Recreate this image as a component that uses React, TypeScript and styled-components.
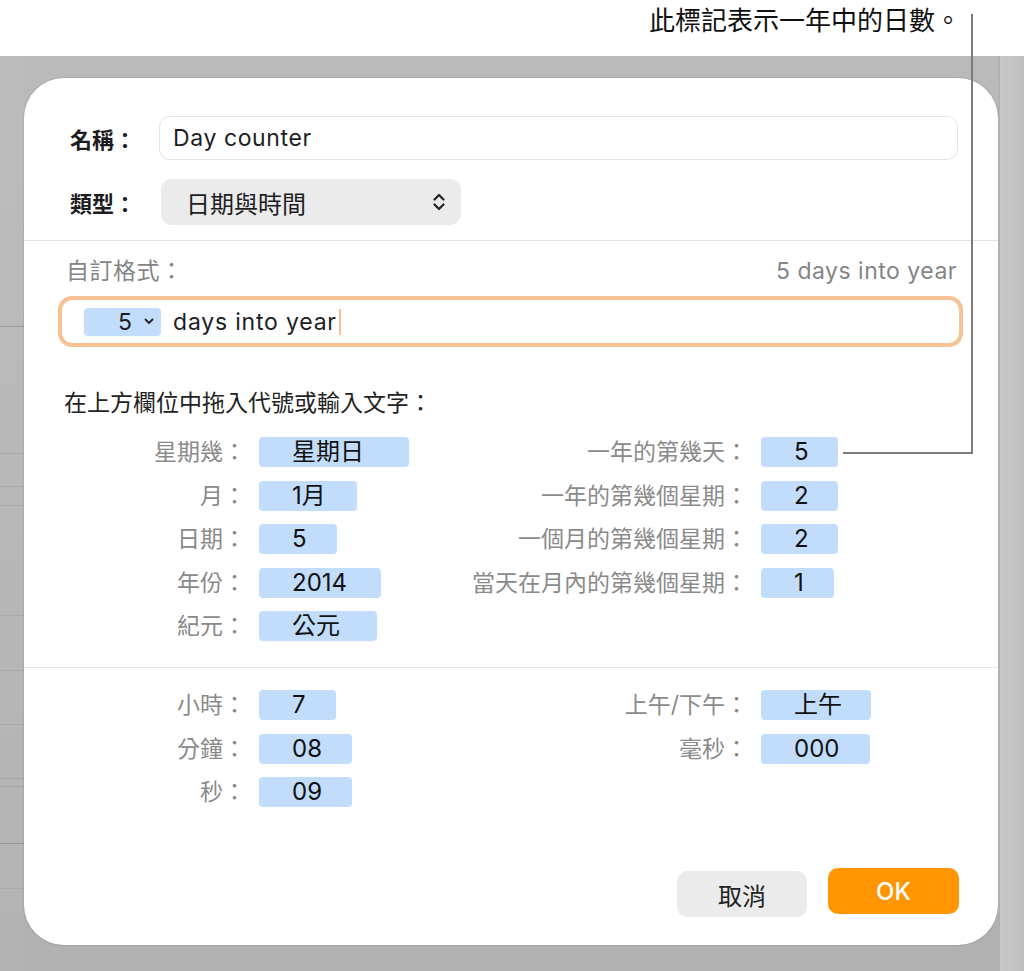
import React from 'react';
import styled, { createGlobalStyle } from 'styled-components';

const GlobalStyle = createGlobalStyle`
  body {
    margin: 0;
    font-family: Inter, 'Noto Sans CJK TC', sans-serif;
    color: #1d1d1f;
  }
`;

const Page = styled.div`
  position: relative;
  width: 1024px;
  height: 971px;
  overflow: hidden;
  background: #fff;
`;

const CalloutBar = styled.div`
  height: 56px;
  display: flex;
  justify-content: flex-end;
  align-items: flex-start;
  padding: 4px 63px 0 0;
  box-sizing: border-box;
`;

const CalloutText = styled.div`
  font-family: 'Noto Sans CJK TC', sans-serif;
  font-size: 26px;
  line-height: 30px;
  color: #111;
`;

const CalloutLine = styled.div<{ $vertical?: boolean }>`
  position: absolute;
  background: #7c7c7c;
  ${({ $vertical }) =>
    $vertical
      ? 'left: 971px; top: 14px; width: 2px; height: 440px;'
      : 'left: 843px; top: 452px; width: 130px; height: 2px;'}
`;

const Backdrop = styled.div`
  display: grid;
  grid-template-columns: 24px 974px 1fr;
  height: 915px;
  background: linear-gradient(to bottom, #bababa, #b1b1b1);
`;

const stripe = (y: number, c: string) =>
  `linear-gradient(${c}, ${c}) 0 ${y}px / 100% 1px no-repeat`;

const LeftStrip = styled.div`
  background: ${[
    stripe(270, '#9a9a9a'),
    stripe(397, '#a8a8a8'),
    stripe(430, '#a8a8a8'),
    stripe(449, '#adadad'),
    stripe(559, '#aaaaaa'),
    stripe(614, '#aaaaaa'),
    stripe(668, '#aaaaaa'),
    stripe(722, '#a6a6a6'),
    stripe(730, '#a6a6a6'),
    stripe(787, '#999999'),
    stripe(832, '#a8a8a8'),
  ].join(', ')},
    linear-gradient(to bottom, #bcbcbc, #b3b3b3);
`;

const RightStrip = styled.div`
  border-left: 2px solid #b0b0b0;
  background: linear-gradient(to right, #c8c8c8, #bfbfbf);
`;

const Dialog = styled.div`
  margin: 22px 0 26px;
  background: #fff;
  border-radius: 40px;
  box-shadow: 0 0 2px rgba(0, 0, 0, 0.25);
  display: flex;
  flex-direction: column;
  padding-top: 38px;
`;

const Header = styled.div`
  display: grid;
  grid-template-columns: 89px 1fr;
  row-gap: 19px;
  align-items: center;
  padding: 0 40px 0 46px;
`;

const FieldLabel = styled.div`
  font-family: 'Noto Sans CJK TC', sans-serif;
  font-weight: 700;
  font-size: 22px;
  color: #1d1d1f;
`;

const TextField = styled.div`
  height: 44px;
  box-sizing: border-box;
  border: 1px solid #e4e4e4;
  border-radius: 11px;
  padding-left: 13px;
  display: flex;
  align-items: center;
  font-size: 23px;
  letter-spacing: 0.6px;
  color: #1d1d1f;
`;

const Popup = styled.div`
  justify-self: start;
  margin-left: 2px;
  width: 300px;
  height: 46px;
  box-sizing: border-box;
  border-radius: 11px;
  background: #ebebeb;
  display: flex;
  align-items: center;
  justify-content: space-between;
  padding: 0 13px 0 25px;
  font-size: 24px;
  color: #1d1d1f;
`;

const Separator = styled.div<{ $gap: number }>`
  height: 1px;
  background: #e3e3e3;
  margin-top: ${({ $gap }) => $gap}px;
`;

const FormatSection = styled.div`
  padding: 0 35px 0 34px;
`;

const FormatHeader = styled.div`
  display: flex;
  justify-content: space-between;
  margin-top: 15px;
  padding: 0 6px 0 8px;
  line-height: 30px;
  font-size: 23px;
  letter-spacing: 0.5px;
  color: #858585;
`;

const FormatField = styled.div`
  margin-top: 10px;
  height: 51px;
  box-sizing: border-box;
  border: 4px solid #f7c293;
  border-radius: 14px;
  display: flex;
  align-items: center;
  padding-left: 22px;
  font-size: 23px;
  letter-spacing: 0.8px;
  color: #1d1d1f;
`;

const FormatToken = styled.div`
  width: 77px;
  height: 28px;
  box-sizing: border-box;
  border-radius: 4px;
  background: #c2dcfb;
  display: flex;
  align-items: center;
  gap: 11px;
  padding-left: 34px;
  margin-right: 12px;
  font-size: 23px;
`;

const Caret = styled.span`
  width: 2px;
  height: 26px;
  margin-left: 2px;
  background: #f7c293;
`;

const Instruction = styled.div`
  margin-top: 41px;
  padding-left: 40px;
  line-height: 30px;
  font-size: 23px;
  color: #222;
`;

const TokenGrid = styled.div<{ $top: number }>`
  display: grid;
  grid-template-columns: 222px 197px 279px auto;
  column-gap: 13px;
  grid-auto-rows: 30px;
  row-gap: 13.5px;
  align-items: center;
  margin-top: ${({ $top }) => $top}px;
`;

const TokenLabel = styled.div`
  text-align: right;
  font-size: 23px;
  line-height: 30px;
  color: #8a8a8a;
  white-space: nowrap;
`;

const Token = styled.div<{ $width: number }>`
  justify-self: start;
  width: ${({ $width }) => $width}px;
  height: 30px;
  box-sizing: border-box;
  border-radius: 4px;
  background: #c2dcfb;
  padding-left: 33px;
  font-size: 24px;
  line-height: 30px;
  color: #111;
  white-space: nowrap;
`;

const Footer = styled.div`
  margin-top: auto;
  display: flex;
  justify-content: flex-end;
  align-items: flex-end;
  gap: 21px;
  padding: 0 39px 28px 0;
`;

const Button = styled.button<{ $primary?: boolean }>`
  width: ${({ $primary }) => ($primary ? 131 : 130)}px;
  height: 46px;
  border: none;
  border-radius: 10px;
  margin-bottom: ${({ $primary }) => ($primary ? 3 : 0)}px;
  background: ${({ $primary }) => ($primary ? '#ff9500' : '#ebebeb')};
  color: ${({ $primary }) => ($primary ? '#fff' : '#222')};
  font-family: Inter, 'Noto Sans CJK TC', sans-serif;
  font-size: 24px;
  font-weight: ${({ $primary }) => ($primary ? 500 : 400)};
`;

type Pair = [string, string, number];

const dateRows: [Pair, Pair | null][] = [
  [['星期幾：', '星期日', 150], ['一年的第幾天：', '5', 77]],
  [['月：', '1月', 98], ['一年的第幾個星期：', '2', 77]],
  [['日期：', '5', 78], ['一個月的第幾個星期：', '2', 77]],
  [['年份：', '2014', 122], ['當天在月內的第幾個星期：', '1', 73]],
  [['紀元：', '公元', 118], null],
];

const timeRows: [Pair, Pair | null][] = [
  [['小時：', '7', 77], ['上午/下午：', '上午', 110]],
  [['分鐘：', '08', 93], ['毫秒：', '000', 109]],
  [['秒：', '09', 93], null],
];

function UpDownIcon(): React.ReactElement {
  return (
    <svg width='18' height='20' viewBox='0 0 18 20' fill='none'>
      <path
        d='M4.5 7.5 L9 3 L13.5 7.5 M4.5 12.5 L9 17 L13.5 12.5'
        stroke='#222'
        strokeWidth='2.2'
        strokeLinecap='round'
        strokeLinejoin='round'
      />
    </svg>
  );
}

function SmallChevron(): React.ReactElement {
  return (
    <svg width='10' height='7' viewBox='0 0 10 7' fill='none'>
      <path
        d='M1.5 1.5 L5 5 L8.5 1.5'
        stroke='#222'
        strokeWidth='1.8'
        strokeLinecap='round'
        strokeLinejoin='round'
      />
    </svg>
  );
}

function TokenRows({
  rows,
}: {
  rows: [Pair, Pair | null][];
}): React.ReactElement {
  return (
    <>
      {rows.map(([left, right]) => (
        <React.Fragment key={left[0]}>
          <TokenLabel>{left[0]}</TokenLabel>
          <Token $width={left[2]}>{left[1]}</Token>
          {right ? (
            <>
              <TokenLabel>{right[0]}</TokenLabel>
              <Token $width={right[2]}>{right[1]}</Token>
            </>
          ) : (
            <>
              <span />
              <span />
            </>
          )}
        </React.Fragment>
      ))}
    </>
  );
}

export default function App(): React.ReactElement {
  return (
    <Page>
      <GlobalStyle />
      <CalloutBar>
        <CalloutText>此標記表示一年中的日數。</CalloutText>
      </CalloutBar>
      <Backdrop>
        <LeftStrip />
        <Dialog>
          <Header>
            <FieldLabel>名稱：</FieldLabel>
            <TextField>Day counter</TextField>
            <FieldLabel>類型：</FieldLabel>
            <Popup>
              <span>日期與時間</span>
              <UpDownIcon />
            </Popup>
          </Header>
          <Separator $gap={15} />
          <FormatSection>
            <FormatHeader>
              <span>自訂格式：</span>
              <span>5 days into year</span>
            </FormatHeader>
            <FormatField>
              <FormatToken>
                <span>5</span>
                <SmallChevron />
              </FormatToken>
              <span>days into year</span>
              <Caret />
            </FormatField>
          </FormatSection>
          <Instruction>在上方欄位中拖入代號或輸入文字：</Instruction>
          <TokenGrid $top={19}>
            <TokenRows rows={dateRows} />
          </TokenGrid>
          <Separator $gap={26} />
          <TokenGrid $top={22}>
            <TokenRows rows={timeRows} />
          </TokenGrid>
          <Footer>
            <Button>取消</Button>
            <Button $primary>OK</Button>
          </Footer>
        </Dialog>
        <RightStrip />
      </Backdrop>
      <CalloutLine $vertical />
      <CalloutLine />
    </Page>
  );
}
